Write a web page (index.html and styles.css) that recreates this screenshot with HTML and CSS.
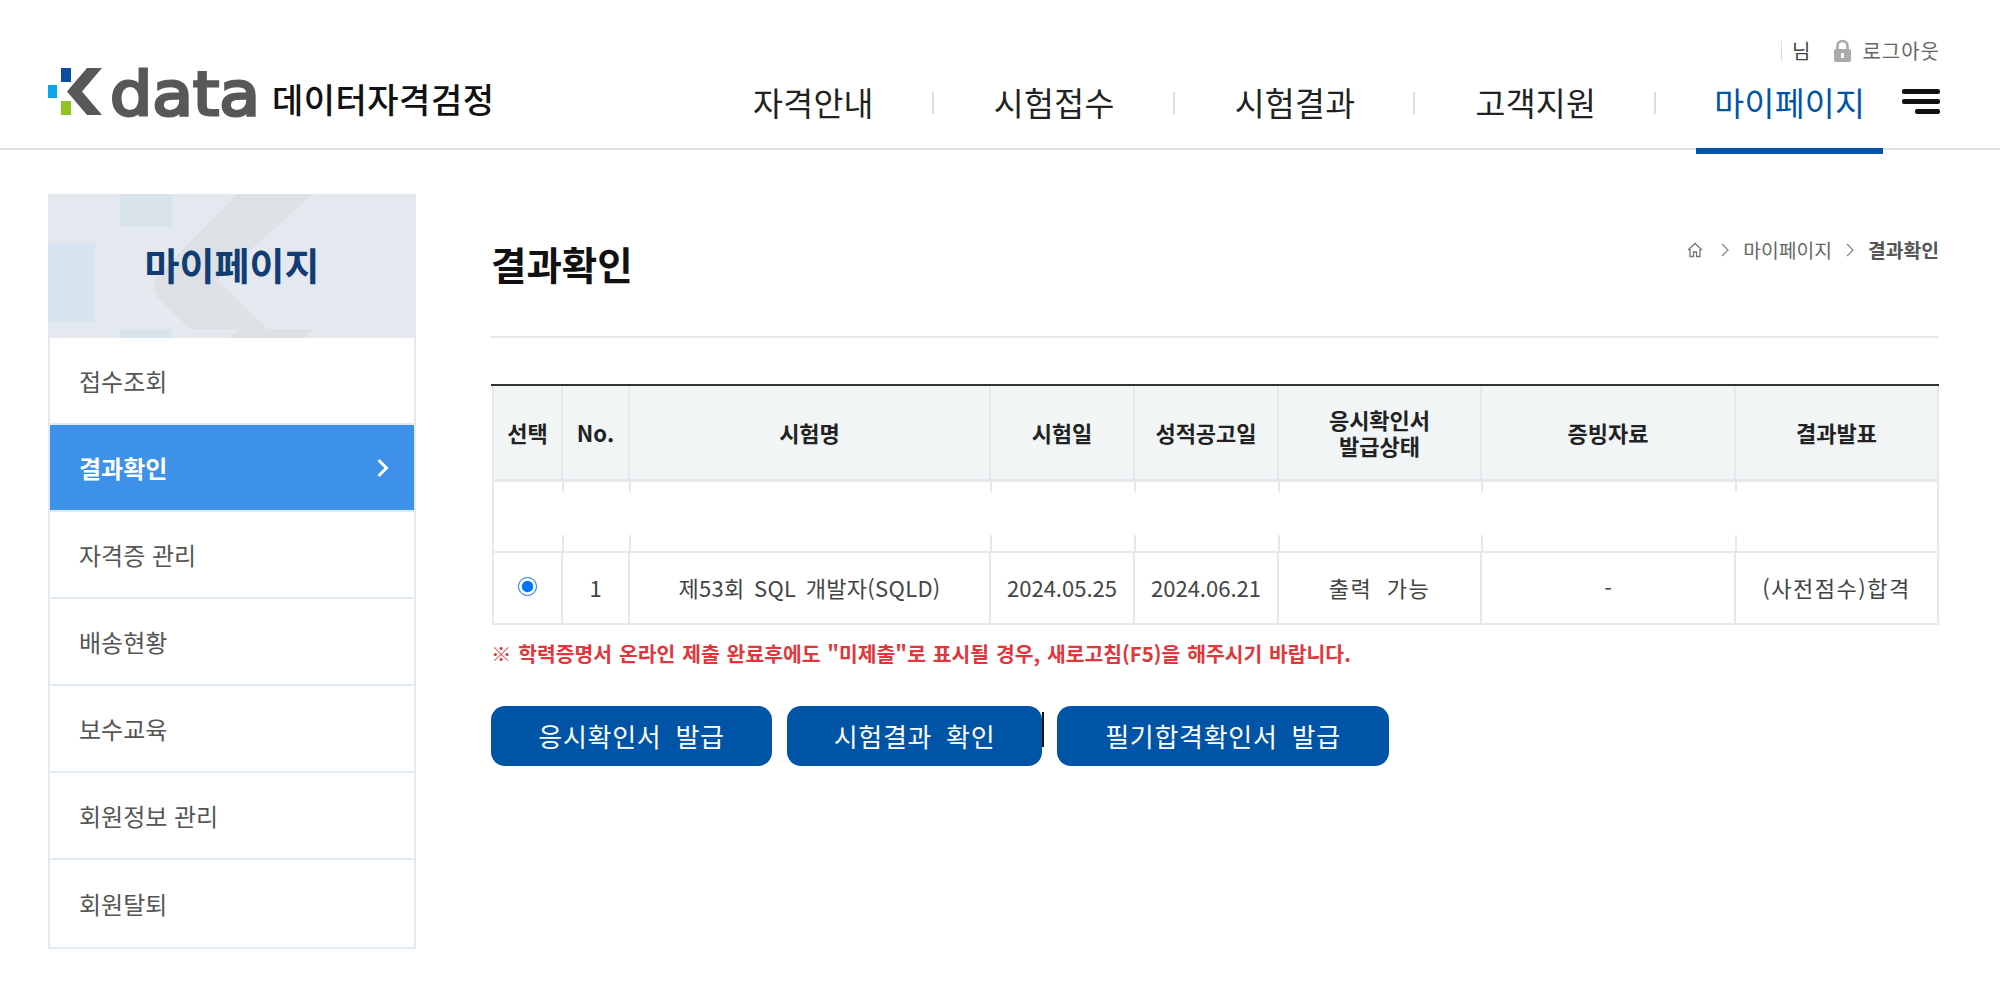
FILE: index.html
```html
<!DOCTYPE html>
<html lang="ko">
<head>
<meta charset="utf-8">
<title>결과확인</title>
<link rel="stylesheet" href="styles.css">
</head>
<body>
<header class="site-header">
  <div class="util">
    <span class="util-name">님</span>
    <a class="util-logout">
      <svg class="lock" viewBox="0 0 19 24" width="19" height="24"><path d="M4.500 11V7a5 5 0 0 1 10 0v4" fill="none" stroke="#aaa" stroke-width="2.600"/><rect x="1" y="10" width="17" height="13" rx="2" fill="#aaa"/><rect x="8" y="14" width="3" height="5" fill="#fff"/></svg>
      <span>로그아웃</span>
    </a>
  </div>
  <div class="bar">
    <a class="logo">
      <svg class="logo-mark" viewBox="0 0 212 50" width="212" height="50">
        <rect x="14" y="1" width="10" height="14" fill="#0a4da2"/>
        <rect x="1" y="18" width="9" height="13" fill="#0aa5ec"/>
        <rect x="14" y="34" width="10" height="14" fill="#8fc31f"/>
        <path d="M55 1H40L20 24.500 40 48H55L35 24.500Z" fill="#58585a"/>
        <text x="63" y="48" class="logo-data" textLength="150" lengthAdjust="spacingAndGlyphs">data</text>
      </svg>
      <span class="logo-text">데이터자격검정</span>
    </a>
    <nav class="gnb">
      <div class="gnb-item"><a>자격안내</a></div>
      <div class="gnb-item"><a>시험접수</a></div>
      <div class="gnb-item"><a>시험결과</a></div>
      <div class="gnb-item"><a>고객지원</a></div>
      <div class="gnb-item gnb-current"><a>마이페이지</a></div>
    </nav>
    <div class="burger"><i></i><i></i><i class="short"></i></div>
  </div>
</header>

<div class="layout">
  <aside class="side">
    <div class="side-head">
      <svg class="side-art" viewBox="0 0 368 144" width="368" height="144">
        <rect x="72" y="0" width="52" height="33" fill="#d9e3ec"/>
        <rect x="0" y="49" width="47" height="79" fill="#d8e5f0"/>
        <rect x="72" y="135" width="52" height="9" fill="#d9e3ec"/>
        <path d="M189 0H265L169 86 219 135H142L112 106Q100 92 112 79Z" fill="#dde1e6"/>
        <path d="M182 144 192 135H265L257 144Z" fill="#dde1e6"/>
      </svg>
      <h2 class="side-title">마이페이지</h2>
    </div>
    <ul class="side-menu">
      <li class="side-item">접수조회</li>
      <li class="side-item side-active">결과확인
        <svg class="side-chev" viewBox="0 0 14 20" width="14" height="20"><path d="M2.500 2l8 8-8 8" fill="none" stroke="#fff" stroke-width="3"/></svg>
      </li>
      <li class="side-item">자격증 관리</li>
      <li class="side-item">배송현황</li>
      <li class="side-item">보수교육</li>
      <li class="side-item">회원정보 관리</li>
      <li class="side-item">회원탈퇴</li>
    </ul>
  </aside>

  <main class="content">
    <div class="title-row">
      <h1 class="page-title">결과확인</h1>
      <div class="crumbs">
        <svg class="home" viewBox="0 0 18 18" width="18" height="18"><path d="M2 9 9 2.500 16 9M4 8v7.500h3.500V11h3v4.500H14V8" fill="none" stroke="#777" stroke-width="1.300"/></svg>
        <svg class="crumb-chev crumb-first" viewBox="0 0 8 14" width="8" height="14"><path d="M1 1l6 6-6 6" fill="none" stroke="#888" stroke-width="1.300"/></svg>
        <span>마이페이지</span>
        <svg class="crumb-chev" viewBox="0 0 8 14" width="8" height="14"><path d="M1 1l6 6-6 6" fill="none" stroke="#888" stroke-width="1.300"/></svg>
        <strong>결과확인</strong>
      </div>
    </div>

    <div class="grid-wrap">
      <table class="grid">
        <colgroup>
          <col class="c1"><col class="c2"><col class="c3"><col class="c4"><col class="c5"><col class="c6"><col class="c7"><col class="c8">
        </colgroup>
        <thead>
          <tr>
            <th>선택</th><th>No.</th><th>시험명</th><th>시험일</th><th>성적공고일</th><th>응시확인서<br>발급상태</th><th>증빙자료</th><th>결과발표</th>
          </tr>
        </thead>
        <tbody>
          <tr class="blank">
            <td></td><td></td><td></td><td></td><td></td><td></td><td></td><td></td>
          </tr>
          <tr class="row">
            <td><input class="pick" type="radio" checked></td>
            <td>1</td>
            <td class="exam">제53회 SQL 개발자(SQLD)</td>
            <td>2024.05.25</td>
            <td>2024.06.21</td>
            <td class="wide">출력 가능</td>
            <td>-</td>
            <td class="wide-result">(사전점수)합격</td>
          </tr>
        </tbody>
      </table>
    </div>

    <p class="note">※ 학력증명서 온라인 제출 완료후에도 "미제출"로 표시될 경우, 새로고침(F5)을 해주시기 바랍니다.</p>

    <div class="actions">
      <a class="btn btn-issue">응시확인서 발급</a>
      <a class="btn btn-result">시험결과 확인</a>
      <a class="btn btn-pass">필기합격확인서 발급</a>
    </div>
  </main>
</div>
</body>
</html>
```

FILE: styles.css
```css
* { box-sizing: border-box; }
html, body { margin: 0; padding: 0; background: #fff; }
body {
  font-family: "Noto Sans CJK KR", "Noto Sans", sans-serif;
  color: #333;
  height: 982px;
  overflow: hidden;
}
ul { list-style: none; margin: 0; padding: 0; }
h1, h2, p { margin: 0; }

/* header */
.site-header {
  height: 150px;
  border-bottom: 2px solid #e0e0e0;
  padding: 38px 60px 0 47px;
}
.util {
  height: 26px;
  display: flex;
  justify-content: flex-end;
  align-items: center;
  font-size: 20px;
  line-height: 26px;
  color: #666;
}
.util-name {
  color: #444;
  margin-right: 23px;
  padding-left: 11px;
  background: linear-gradient(#cfdcec, #cfdcec) no-repeat left center / 1px 20px;
}
.util-logout { display: flex; align-items: center; gap: 10px; letter-spacing: 1px; }
.lock { display: block; }
.bar { display: flex; height: 90px; }
.logo { display: flex; flex: none; align-items: flex-start; gap: 13px; padding-top: 3px; width: 646px; }
.logo-mark { display: block; flex: none; overflow: visible; }
.logo-data { font-family: "DejaVu Sans", sans-serif; font-weight: 400; font-size: 60px; fill: #58585a; stroke: #58585a; stroke-width: 3px; }
.logo-text { font-size: 34px; line-height: 50px; font-weight: 500; color: #111; margin-top: 7px; letter-spacing: .5px; white-space: nowrap; }
.gnb { display: flex; flex: none; }
.gnb-item {
  flex: none;
  padding: 0 40px;
  height: 84px;
  background: linear-gradient(#ddd, #ddd) no-repeat right 28px / 2px 22px;
}
.gnb-current { background: none; padding-right: 0; }
.gnb-item a {
  display: block;
  height: 90px;
  padding: 0 20px;
  font-size: 32.500px;
  letter-spacing: .3px;
  line-height: 75px;
  color: #222;
  white-space: nowrap;
}
.gnb-current a { color: #0054a6; border-bottom: 6px solid #0054a6; padding: 0 18px; }
.burger { flex: none; margin-left: 19px; width: 38px; padding-top: 25px; display: flex; flex-direction: column; align-items: flex-end; gap: 5px; }
.burger i { display: block; width: 38px; height: 5px; border-radius: 2px; background: #111; }
.burger i.short { width: 25px; }

/* layout */
.layout { display: flex; gap: 75px; padding: 44px 61px 0 48px; }
.side { width: 368px; flex: none; }
.side-head {
  position: relative;
  height: 144px;
  background: #e4e9ef;
  display: flex;
  align-items: center;
  justify-content: center;
}
.side-art { position: absolute; left: 0; top: 0; display: block; }
.side-title {
  position: relative;
  font-size: 38px;
  font-weight: 700;
  line-height: 50px;
  color: #123d73;
  margin-top: -4px;
}
.side-menu { border: 2px solid #e2eaf2; border-top: 0; }
.side-item {
  height: 87px;
  display: flex;
  align-items: center;
  justify-content: space-between;
  padding: 0 24px 0 29px;
  font-size: 24px;
  color: #555;
  border-bottom: 2px solid #e2eaf2;
}
.side-item:last-child { border-bottom: 0; height: 87px; }
.side-active { background: #3d91e8; color: #fff; font-weight: 700; }

/* content */
.content { width: 1448px; flex: none; }
.title-row {
  height: 144px;
  display: flex;
  justify-content: space-between;
  align-items: flex-start;
  border-bottom: 2px solid #e6e8ea;
}
.page-title { font-size: 38.500px; font-weight: 700; line-height: 50px; color: #111; margin-top: 44px; }
.crumbs { display: flex; align-items: center; margin-top: 42px; font-size: 19.300px; line-height: 28px; color: #666; gap: 12px; }
.crumbs strong { color: #555; font-weight: 700; }
.home, .crumb-chev { display: block; }
.crumb-chev { margin: 0 2px; }
.crumb-first { margin-left: 5px; }

/* table */
.grid-wrap {
  margin-top: 46px;
  border-top: 2px solid #333;
  padding: 0 1px;
}
.grid {
  width: 1445px;
  table-layout: fixed;
  border-collapse: collapse;
  font-size: 22px;
  text-align: center;
}
.c1 { width: 69px; } .c2 { width: 67px; } .c3 { width: 361px; } .c4 { width: 144px; }
.c5 { width: 144px; } .c6 { width: 203px; } .c7 { width: 254px; } .c8 { width: 203px; }
.grid th {
  height: 94px;
  padding: 0;
  background: #f2f5f6;
  border: 2px solid #e6e9ec;
  border-top: 0;
  border-bottom-width: 3px;
  font-size: 22px;
  line-height: 26px;
  font-weight: 700;
  color: #222;
}
.grid td {
  height: 72px;
  padding: 0;
  border: 2px solid #e6e9ec;
  color: #444;
}
.grid .row td { padding-bottom: 3px; }
.grid .blank td {
  height: 72px;
  border-top: 0;
  border-bottom: 0;
  border-left: 0;
  border-right: 0;
  background:
    linear-gradient(#e6e9ec, #e6e9ec) no-repeat left top / 2px 10px,
    linear-gradient(#e6e9ec, #e6e9ec) no-repeat left bottom / 2px 16px;
}
.grid .blank td:first-child { border-left: 2px solid #e6e9ec; background: none; }
.grid .blank td:last-child { border-right: 2px solid #e6e9ec; }
.exam { letter-spacing: .3px; word-spacing: 3px; }
.wide { word-spacing: 7px; letter-spacing: 1.500px; }
.wide-result { letter-spacing: 1.500px; }
.pick { display: block; width: 19px; height: 19px; margin: 0 auto; }

.note {
  margin-top: 14px;
  font-size: 20.400px;
  line-height: 28px;
  font-weight: 700;
  color: #e0363c;
  word-spacing: 1.200px;
}

.actions { display: flex; gap: 15px; margin-top: 39px; }
.btn {
  position: relative;
  display: block;
  flex: none;
  height: 60px;
  border-radius: 14px;
  background: #0054a6;
  color: #fff;
  font-size: 26px;
  line-height: 59px;
  letter-spacing: .7px;
  word-spacing: 6px;
  text-align: center;
}
.btn-issue { width: 281px; }
.btn-result { width: 255px; }
.btn-pass { width: 332px; }
.btn-result::after {
  content: "";
  position: absolute;
  right: -2px;
  top: 6px;
  width: 2px;
  height: 35px;
  background: #111;
}
```
